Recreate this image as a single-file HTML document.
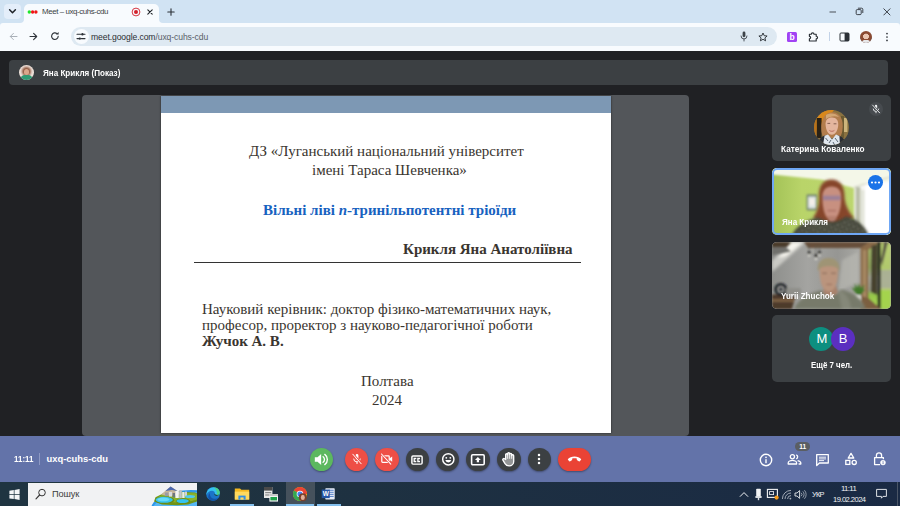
<!DOCTYPE html>
<html lang="uk">
<head>
<meta charset="utf-8">
<title>Meet – uxq-cuhs-cdu</title>
<style>
*{box-sizing:border-box;margin:0;padding:0}
html,body{width:900px;height:506px;overflow:hidden;background:#202124}
body{position:relative;font-family:"Liberation Sans",sans-serif;color:#fff}
.abs,.abs-all *{position:absolute}
div,span,svg{position:absolute;white-space:nowrap}
/* chrome */
#tabstrip{left:0;top:0;width:900px;height:23px;background:#d1e3f3}
#toolbar{left:0;top:23px;width:900px;height:28px;background:#f8fbfe}
#tab{left:23.5px;top:3.7px;width:135.5px;height:20.3px;background:#f8fbfe;border-radius:5px 5px 0 0}
#tabmenu{left:4px;top:4px;width:17px;height:15px;background:#e4eefa;border-radius:4px}
#omni{left:71px;top:27px;width:706px;height:19px;border-radius:10px;background:#dee9f2}
#sitebtn{left:74px;top:29px;width:15px;height:15px;border-radius:8px;background:#f8fbfe}
.ct{color:#2b2f33;font-size:8.3px;line-height:10px}
/* meet */
#meet{left:0;top:51px;width:900px;height:385px;background:#202124}
#pbar{left:9px;top:60px;width:879px;height:25px;border-radius:4px;background:#3c4043}
#stage{left:82px;top:95px;width:607px;height:341px;border-radius:4px;background:#53565a}
#slide{left:161px;top:96px;width:450px;height:337px;background:#fff;box-shadow:0 0 2px rgba(0,0,0,.6)}
#band{left:0;top:0;width:450px;height:17px;background:#7d98b4}
.st{font-family:"Liberation Serif",serif;font-size:15px;line-height:18px;color:#3a352f}
.tile{left:772px;width:119px;height:67px;border-radius:5px;background:#3c4043;overflow:hidden}
.nm{font-weight:bold;font-size:9.2px;line-height:10px;color:#fff;transform:scaleX(.88);transform-origin:0 50%}
/* bottom */
#bbar{left:0;top:436px;width:900px;height:46px;background:#6373a9}
.btn{top:447.7px;width:23.6px;height:23.6px;border-radius:12px;background:#3c4043;box-shadow:0 1px 2px rgba(0,0,0,.35)}
.red{background:#ea4335}
/* taskbar */
#task{left:0;top:482px;width:900px;height:24px;background:linear-gradient(90deg,#20353f 0%,#1e3141 40%,#1a2a44 100%)}
</style>
</head>
<body>
<!-- ===== Chrome window frame ===== -->
<div id="tabstrip"></div>
<div id="toolbar"></div>
<div id="tabmenu"></div>
<div id="tab"></div>
<svg style="left:19.5px;top:19px" width="4" height="4" viewBox="0 0 4 4"><path d="M0 4 H4 V0 A4 4 0 0 1 0 4 Z" fill="#f8fbfe"/></svg>
<svg style="left:159px;top:19px" width="4" height="4" viewBox="0 0 4 4"><path d="M4 4 H0 V0 A4 4 0 0 0 4 4 Z" fill="#f8fbfe"/></svg>
<svg style="left:0;top:23px" width="3" height="3" viewBox="0 0 3 3"><path d="M0 0 H3 A3 3 0 0 0 0 3 Z" fill="#d1e3f3"/></svg>
<svg style="left:897px;top:23px" width="3" height="3" viewBox="0 0 3 3"><path d="M3 0 H0 A3 3 0 0 1 3 3 Z" fill="#d1e3f3"/></svg>
<div id="omni"></div>
<div id="sitebtn"></div>

<!-- tab strip icons -->
<svg style="left:8px;top:8px" width="9" height="7" viewBox="0 0 9 7"><path d="M1.6 1.8 L4.5 4.7 L7.4 1.8" fill="none" stroke="#1f2328" stroke-width="1.5" stroke-linecap="round" stroke-linejoin="round"/></svg>
<svg style="left:27px;top:9px" width="12" height="6" viewBox="0 0 12 6"><circle cx="2.3" cy="3" r="1.7" fill="#1ee62c"/><circle cx="5.6" cy="3" r="1.7" fill="#f01616"/><circle cx="8.9" cy="3" r="1.7" fill="#f01616"/></svg>
<svg style="left:131px;top:7px" width="10" height="10" viewBox="0 0 10 10"><circle cx="5" cy="5" r="3.9" fill="none" stroke="#d3202c" stroke-width="0.9"/><circle cx="5" cy="5" r="2" fill="#d3202c"/></svg>
<svg style="left:147px;top:9px" width="6" height="6" viewBox="0 0 6 6"><path d="M0.8 0.8 L5.2 5.2 M5.2 0.8 L0.8 5.2" stroke="#1f2328" stroke-width="1.1" stroke-linecap="round"/></svg>
<svg style="left:167px;top:8px" width="8" height="8" viewBox="0 0 8 8"><path d="M4 0.8 V7.2 M0.8 4 H7.2" stroke="#2b3036" stroke-width="1.1" stroke-linecap="round"/></svg>
<!-- window controls -->
<svg style="left:829px;top:11px" width="8" height="2" viewBox="0 0 8 2"><path d="M0.5 1 H7" stroke="#3a3f45" stroke-width="0.9"/></svg>
<svg style="left:855px;top:7px" width="9" height="9" viewBox="0 0 9 9"><rect x="1.2" y="2.6" width="5" height="5" rx="1" fill="none" stroke="#2b3036" stroke-width="0.9"/><path d="M2.9 1.2 H6.6 Q7.8 1.2 7.8 2.4 V6" fill="none" stroke="#2b3036" stroke-width="0.9"/></svg>
<svg style="left:883px;top:8px" width="8" height="8" viewBox="0 0 8 8"><path d="M0.8 0.8 L7 7 M7 0.8 L0.8 7" stroke="#2b3036" stroke-width="0.9" stroke-linecap="round"/></svg>
<!-- nav buttons -->
<svg style="left:9px;top:32px" width="9" height="9" viewBox="0 0 9 9"><path d="M8 4.5 H1.4 M4.4 1.4 L1.3 4.5 L4.4 7.6" fill="none" stroke="#a9b0b8" stroke-width="1" stroke-linecap="round" stroke-linejoin="round"/></svg>
<svg style="left:29px;top:32px" width="9" height="9" viewBox="0 0 9 9"><path d="M1 4.5 H7.6 M4.6 1.4 L7.7 4.5 L4.6 7.6" fill="none" stroke="#30353b" stroke-width="1.1" stroke-linecap="round" stroke-linejoin="round"/></svg>
<svg style="left:50px;top:31px" width="10" height="10" viewBox="0 0 10 10"><path d="M8.2 5.3 A3.3 3.3 0 1 1 7 2.6" fill="none" stroke="#30353b" stroke-width="1.15" stroke-linecap="round"/><path d="M8.6 0.9 V3.6 H5.9 Z" fill="#30353b"/></svg>
<!-- site settings (tune) icon -->
<svg style="left:76px;top:32px" width="10" height="9" viewBox="0 0 10 9"><path d="M1 2.2 H4.6 M7.6 2.2 H9 M1 6.6 H2.6 M5.4 6.6 H9" stroke="#2b3036" stroke-width="1.1" stroke-linecap="round"/><circle cx="6.4" cy="2.2" r="1.2" fill="#2b3036"/><circle cx="3.8" cy="6.6" r="1.2" fill="#2b3036"/></svg>
<!-- mic -->
<svg style="left:740px;top:31px" width="8" height="11" viewBox="0 0 8 11"><rect x="2.6" y="0.6" width="2.8" height="5.6" rx="1.4" fill="#3d4349"/><path d="M1 5 A3 3 0 0 0 7 5 M4 8 V10" fill="none" stroke="#3d4349" stroke-width="0.9" stroke-linecap="round"/></svg>
<!-- star -->
<svg style="left:758px;top:32px" width="10" height="10" viewBox="0 0 10 10"><path d="M5 1 L6.2 3.7 L9.1 4 L6.9 5.9 L7.6 8.8 L5 7.3 L2.4 8.8 L3.1 5.9 L0.9 4 L3.8 3.7 Z" fill="none" stroke="#2b3036" stroke-width="0.95" stroke-linejoin="round"/></svg>
<!-- purple ext -->
<div style="left:787px;top:32px;width:10px;height:10px;border-radius:1.5px;background:#a142f4"></div>
<span style="left:789.6px;top:31.6px;font-size:8.5px;line-height:10px;font-weight:bold;color:#fff">b</span>
<!-- puzzle -->
<svg style="left:808px;top:31px" width="11" height="11" viewBox="0 0 11 11"><path d="M1.4 3.2 H3.3 A1.35 1.35 0 0 1 6 3.2 H8.2 V5.2 A1.35 1.35 0 0 1 8.2 7.9 V10 H1.4 V7.8 A1.25 1.25 0 0 0 1.4 5.3 Z" fill="none" stroke="#2b3036" stroke-width="1.15" stroke-linejoin="round"/></svg>
<div style="left:829px;top:32px;width:1px;height:9px;background:#c3d3e8"></div>
<!-- side panel -->
<svg style="left:839px;top:32px" width="11" height="10" viewBox="0 0 11 10"><rect x="1" y="1" width="9" height="8" rx="1" fill="none" stroke="#2b3036" stroke-width="1"/><rect x="5.6" y="1" width="4.4" height="8" fill="#2b3036"/></svg>
<!-- avatar -->
<div style="left:860px;top:31px;width:12px;height:12px;border-radius:6px;background:radial-gradient(circle at 50% 45%,#e9c6b3 0 30%,#8a4a32 34% 62%,#5d2f22 66%);overflow:hidden"><div style="left:2px;top:8.5px;width:8px;height:5px;border-radius:3px;background:#e8e8ea"></div></div>
<!-- kebab -->
<svg style="left:885px;top:32px" width="4" height="10" viewBox="0 0 4 10"><circle cx="2" cy="1.6" r="0.85" fill="#2b3036"/><circle cx="2" cy="5" r="0.85" fill="#2b3036"/><circle cx="2" cy="8.4" r="0.85" fill="#2b3036"/></svg>
<span class="ct" style="left:42px;top:7px;font-size:7.9px;letter-spacing:-0.4px;color:#3a3f45">Meet – uxq-cuhs-cdu</span>
<span class="ct" style="left:91px;top:32px;font-size:8.6px;letter-spacing:-0.1px">meet.google.com<span style="position:static;color:#596068">/uxq-cuhs-cdu</span></span>

<!-- ===== Meet ===== -->
<div id="meet"></div>
<div id="pbar"></div>
<div style="left:18.5px;top:65px;width:15px;height:15px;border-radius:8px;overflow:hidden;background:#efe3dc">
  <div style="left:3px;top:2px;width:9px;height:9px;border-radius:5px;background:#8a4f35;filter:blur(.8px)"></div>
  <div style="left:5px;top:4px;width:5px;height:6px;border-radius:3px;background:#d9a78c;filter:blur(.6px)"></div>
  <div style="left:1px;top:9.5px;width:13px;height:7px;border-radius:5px 5px 0 0;background:#2f9a74;filter:blur(.7px)"></div>
</div>
<span class="nm" style="left:42.8px;top:67.6px">Яна Крикля (Показ)</span>

<div id="stage"></div>
<div id="slide">
  <div id="band"></div>
  <span class="st" style="left:88px;top:46px">ДЗ «Луганський національний університет</span>
  <span class="st" style="left:151px;top:65px">імені Тараса Шевченка»</span>
  <span class="st" style="left:102px;top:105px;font-weight:bold;color:#1762bf">Вільні ліві <i>n</i>-тринільпотентні тріоїди</span>
  <span class="st" style="left:242px;top:144px;font-weight:bold">Крикля Яна Анатоліївна</span>
  <div style="left:33px;top:166px;width:387px;height:1px;background:#333"></div>
  <span class="st" style="left:41px;top:204px">Науковий керівник: доктор фізико-математичних наук,</span>
  <span class="st" style="left:41px;top:220px">професор, проректор з науково-педагогічної роботи</span>
  <span class="st" style="left:41px;top:236px;font-weight:bold">Жучок А. В.</span>
  <span class="st" style="left:200px;top:276px">Полтава</span>
  <span class="st" style="left:211px;top:295px">2024</span>
</div>


<!-- tiles -->
<div class="tile" id="t1" style="top:95px;height:66px">
  <svg style="left:42.4px;top:14.7px" width="35" height="35" viewBox="0 0 35 35">
    <defs><clipPath id="av"><circle cx="17.5" cy="17.5" r="17.5"/></clipPath>
    <filter id="b0" x="-5%" y="-5%" width="110%" height="110%"><feGaussianBlur stdDeviation="0.7"/></filter></defs>
    <g clip-path="url(#av)">
      <rect width="35" height="35" fill="#8a7240"/>
      <g filter="url(#b0)">
        <path d="M0 0 H20 L8 16 L0 22 Z" fill="#d8881c"/>
        <rect x="2.6" y="8" width="5" height="20" fill="#2b2418"/>
        <rect x="0" y="10" width="2.6" height="16" fill="#b8721a"/>
        <rect x="27" y="6" width="3" height="22" fill="#6b5a30"/>
        <rect x="30" y="8" width="3.4" height="14" fill="#cdb57c"/>
        <!-- hair -->
        <path d="M8 24 C5.6 12 10 2.4 18.6 2.2 C26 2.2 30 10 28.4 20 C28 24 26.6 26.6 25 28 L10 28 Z" fill="#b27d4e"/>
        <path d="M12 5 C16 2.6 22 3 25 7 C21 5.6 16 6 12 9 Z" fill="#d2a673"/>
        <!-- face -->
        <path d="M11.6 15 C11.2 9.6 14 7.4 18 7.4 C22.4 7.4 24.8 10.4 24.2 15.6 C23.8 20.6 21.6 24.8 17.8 24.8 C14 24.8 12 20 11.6 15 Z" fill="#e4b69e"/>
        <path d="M13.4 13.4 H16.2 M19.6 13.8 H22.4" stroke="#7a5848" stroke-width=".9"/>
        <path d="M15.4 20.4 C16.6 21.6 19 21.6 20.4 20.4" stroke="#b5655a" stroke-width=".9" fill="none"/>
        <!-- clothes -->
        <path d="M3 35 C5 28 9 25.6 13 25 L18 29 L23 25 C28 26 31 29 32.6 35 Z" fill="#2c2f36"/>
        <path d="M9 35 L10.6 25.8 L14 24.4 L18 29.4 L22 24.4 L25.4 26 L26 35 Z" fill="#dfe6ee"/>
        <path d="M11.6 28 L14 31 M21 28 L24 32 M15 33 L17 30 M19 32 L20.6 35" stroke="#4a5663" stroke-width=".9"/>
      </g>
    </g>
  </svg>
  <div style="left:97px;top:7px;width:14px;height:14px;border-radius:7px;background:#474b4f"></div>
  <svg style="left:99px;top:9px" width="10" height="10" viewBox="0 0 10 10"><rect x="3.8" y="0.8" width="2.4" height="5" rx="1.2" fill="#f1f3f4"/><path d="M2.2 4.6 A2.8 2.8 0 0 0 7.8 4.6 M5 7.4 V9.2" fill="none" stroke="#f1f3f4" stroke-width="0.9"/><path d="M1.4 0.9 L8.8 9" stroke="#474b4f" stroke-width="2"/><path d="M1.6 1.1 L8.6 8.8" stroke="#f1f3f4" stroke-width="0.9" stroke-linecap="round"/></svg>
  <span class="nm" style="left:9.3px;top:49px;transform:scaleX(.896)">Катерина Коваленко</span>
</div>

<div class="tile" id="t2" style="top:168px;height:66.5px;background:#b7d169">
  <svg style="left:0;top:0" width="119" height="67" viewBox="0 0 119 67">
    <defs>
      <filter id="b1" x="-5%" y="-5%" width="110%" height="110%"><feGaussianBlur stdDeviation="0.9"/></filter>
      <filter id="b2" x="-5%" y="-5%" width="110%" height="110%"><feGaussianBlur stdDeviation="1.6"/></filter>
      <linearGradient id="wall" x1="0" x2="1" y1="0" y2="0"><stop offset="0" stop-color="#a3c257"/><stop offset=".25" stop-color="#b9d469"/><stop offset=".7" stop-color="#bcd66e"/></linearGradient>
      <pattern id="flo" width="5" height="5" patternUnits="userSpaceOnUse" patternTransform="rotate(25)"><rect width="5" height="5" fill="#3b3c31"/><circle cx="1.4" cy="1.6" r="1.1" fill="#8d8f7e"/><circle cx="3.8" cy="3.8" r="0.9" fill="#c9cbb8"/></pattern>
    </defs>
    <rect width="119" height="67" fill="url(#wall)"/>
    <g filter="url(#b1)">
      <!-- ceiling -->
      <path d="M0 0 H119 V20 H82 L49 11.6 L0 6.6 Z" fill="#f4f7e8"/>
      <!-- window / curtain -->
      <rect x="82" y="17" width="40" height="52" fill="#f7f7f2"/>
      <rect x="83.5" y="19" width="5" height="50" fill="#b9bda8"/>
      <rect x="88.5" y="22" width="4" height="47" fill="#e3e5da"/>
      <rect x="93" y="14" width="26" height="55" fill="#ffffff"/>
      <path d="M82 19 L119 9" stroke="#cfd2be" stroke-width="1.2"/>
      <!-- picture frame -->
      <rect x="34.6" y="26.4" width="10.6" height="16" fill="#76886f"/>
      <rect x="36.2" y="28.6" width="7.6" height="11.8" fill="#dfe6e4"/>
      <rect x="37.4" y="31" width="5" height="6" fill="#f4efe9"/>
    </g>
    <g filter="url(#b2)">
      <!-- hair -->
      <path d="M47 30 C46 17 52 11.6 59.5 11.6 C67 11.6 73 17 72.6 30 C73.6 38 77 44 82 50 L60 58 L41 50 C45 44 47 38 47 30 Z" fill="#86452c"/>
    </g>
    <g filter="url(#b1)">
      <!-- face -->
      <path d="M50.4 30 C50 22 54 18.6 59.8 18.6 C65.6 18.6 69.6 22 69.2 30 C69.2 40 66.6 52 59.8 52 C53 52 50.4 40 50.4 30 Z" fill="#c89080"/>
      <path d="M51 27.6 H68.6 V32.2 H51 Z" fill="#7a72a8" opacity=".55"/>
      <path d="M55.5 42.6 H64" stroke="#9a5a50" stroke-width="1.3" opacity=".7"/>
      <path d="M55 48 C56 57 64 57 65 48 Z" fill="#b67f6e"/>
    </g>
    <g filter="url(#b2)">
      <!-- clothes -->
      <path d="M20 67 C25 57 36 51.6 46 49.6 C52 52.6 55 54 60 54 C65 54 69 52 74 48.6 C84 50.6 92 57 96.6 67 Z" fill="#45463a"/>
    </g>
    <g filter="url(#b1)" opacity=".6">
      <path d="M23 67 C27 58.6 37 53.6 46 51.6 C52 54.6 55 56 60 56 C65 56 69 54 74 50.6 C83 52.6 90 58 94 67 Z" fill="url(#flo)"/>
    </g>
  </svg>
  <div style="left:0;top:0;width:119px;height:66.5px;border:2.3px solid #6fa7f5;border-radius:5px"></div>
  <div style="left:96.3px;top:7.3px;width:15.2px;height:15.2px;border-radius:8px;background:#1a73e8"></div>
  <svg style="left:98.4px;top:13.4px" width="11" height="3" viewBox="0 0 11 3"><circle cx="2" cy="1.5" r="1.1" fill="#fff"/><circle cx="5.5" cy="1.5" r="1.1" fill="#fff"/><circle cx="9" cy="1.5" r="1.1" fill="#fff"/></svg>
  <span class="nm" style="left:9.6px;top:49px;transform:scaleX(.875)">Яна Крикля</span>
</div>

<div class="tile" id="t3" style="top:242px;height:66.5px;background:#a9a9a5">
  <svg style="left:0;top:0" width="119" height="67" viewBox="0 0 119 67">
    <defs>
      <linearGradient id="cw" x1="0" x2="1" y1="0" y2="0"><stop offset="0" stop-color="#8e8f8c"/><stop offset=".3" stop-color="#a4a4a1"/><stop offset=".55" stop-color="#969693"/><stop offset=".75" stop-color="#aaaaa5"/></linearGradient>
      <linearGradient id="gl" x1="0" x2="0" y1="0" y2="1"><stop offset="0" stop-color="#a9c070"/><stop offset=".35" stop-color="#8ea65c"/><stop offset=".52" stop-color="#a5a698"/><stop offset=".7" stop-color="#9a9d8c"/><stop offset=".78" stop-color="#93c548"/><stop offset="1" stop-color="#b0dc58"/></linearGradient>
    </defs>
    <rect width="119" height="67" fill="url(#cw)"/>
    <g filter="url(#b2)">
      <!-- sunlight band -->
      <path d="M18 0 H34 L0 30 V19 Z" fill="#c9c9c4"/>
      <path d="M20 0 H31 L14 14 L6 16 Z" fill="#f6f5ee"/>
      <path d="M70 18 L86 10 V40 L66 50 Z" fill="#bdbdb6" opacity=".6"/>
    </g>
    <g filter="url(#b1)">
      <!-- beams -->
      <path d="M0 0 H19 L14 5.6 H0 Z" fill="#4b3a29"/>
      <path d="M0 5.6 H14 L19 9.4 L0 13 Z" fill="#70706c"/>
      <path d="M32 0 H97 L94 6 H36 Z" fill="#67503a"/>
      <!-- right frame -->
      <path d="M88.6 6 L97 0 H119 V67 H88.6 Z" fill="#8a6b49"/>
      <rect x="91" y="8" width="3" height="50" fill="#a88a63"/>
      <!-- glass -->
      <path d="M96.4 8 L104 2 H119 V67 H108 L96.4 57 Z" fill="url(#gl)"/>
      <path d="M108.4 0 H119 V67 H108.4 Z" fill="#c3da74" opacity=".65"/>
      <path d="M109 28 H119 V46 H109 Z" fill="#a8ab9a" opacity=".8"/>
      <path d="M108.4 48 H119 V67 H108.4 Z" fill="#a4d44d"/>
      <!-- trunks -->
      <path d="M99.4 4 L105.4 2 L105 53 L98.8 50 Z" fill="#46432f"/>
      <path d="M112 0 L116 0 L110 24 L109 18 Z" fill="#5a5746"/>
      <rect x="105.6" y="0" width="3" height="67" fill="#1d1e1a"/>
      <path d="M88.6 54 L96.4 56 L109 67 H92 Z" fill="#7c5f40"/>
      <!-- lamps -->
      <path d="M37 3 V10 M44 3 V13 M47.4 3 V10" stroke="#55554f" stroke-width=".6"/>
      <rect x="35.8" y="9.2" width="2.6" height="3.4" fill="#2e2e2b"/><circle cx="37.1" cy="13.4" r="1.1" fill="#ecebe2"/>
      <rect x="42.6" y="12.2" width="2.8" height="3.6" fill="#2e2e2b"/><circle cx="44" cy="16.8" r="1.2" fill="#ecebe2"/>
      <rect x="46.2" y="9" width="2.6" height="3.4" fill="#2e2e2b"/><circle cx="47.5" cy="13.2" r="1.1" fill="#ecebe2"/>
      <!-- desk / fan / device -->
      <path d="M0 52.6 H24 L20 67 H0 Z" fill="#4d3a29"/>
      <path d="M0 57 H22 V60 H0 Z" fill="#7a5e42"/>
      <circle cx="8.8" cy="47.4" r="5.2" fill="none" stroke="#1f2227" stroke-width="2.6"/>
      <circle cx="8.8" cy="47.4" r="1.8" fill="#3a3d42"/>
      <rect x="14" y="46" width="15" height="8" rx="1.5" fill="#8f8f8a"/>
      <!-- plant -->
      <path d="M86 53 L80.4 46 L84 48 L83.4 43.6 L86 47 L87 43 L88.4 47 L91.6 44.4 L90 49 L92.6 47.4 L88 53 Z" fill="#437a2c" stroke="#437a2c" stroke-width="1.2"/>
      <rect x="83.6" y="53" width="5.4" height="5" fill="#d9d9d2"/>
    </g>
    <g filter="url(#b2)">
      <!-- sweater -->
      <path d="M22 67 C26 57 38 51 49 48.6 C53 51 56 52.6 59.6 52.6 C63 52.6 66 50.6 69 47.4 C80 49.6 90 56 94 67 Z" fill="#777a6a"/>
      <path d="M66 48 C74 50 78 58 79 67 H70 Z" fill="#8f9183" opacity=".6"/>
    </g>
    <g filter="url(#b1)">
      <!-- neck, face, hair -->
      <path d="M52 44 H64 L66 50.6 C62 55 55 55 51 50.6 Z" fill="#a8826c"/>
      <path d="M47.6 30 C47 22 51 18.6 57 18.6 C63 18.6 66.6 22 66 30 C66 39 63.6 49.6 57 49.6 C50.4 49.6 47.6 39 47.6 30 Z" fill="#ba947d"/>
      <path d="M46 30 C44.4 20 50 16 56.6 16 C63.4 16 68.6 20 67.2 30 C66 25.4 63 24 56.6 24.2 C50.6 24.2 47.4 25.6 46 30 Z" fill="#9f9474"/>
      <path d="M50 31.2 H55 M59 31.2 H64" stroke="#6d5443" stroke-width="1.1" opacity=".7"/>
      <path d="M54.4 42.4 H60" stroke="#8a5d50" stroke-width="1.1" opacity=".7"/>
    </g>
  </svg>
  <span class="nm" style="left:9.4px;top:49px;transform:scaleX(.876)">Yurii Zhuchok</span>
</div>

<div class="tile" id="t4" style="top:315.2px;height:66.4px">
  <div style="left:37px;top:12px;width:24px;height:24px;border-radius:12px;background:#0d8f80"></div>
  <div style="left:59px;top:12px;width:24px;height:24px;border-radius:12px;background:#5b2fc0"></div>
  <span style="left:44.5px;top:16px;font-size:13px;line-height:16px;color:#fff">M</span>
  <span style="left:66.8px;top:16px;font-size:13px;line-height:16px;color:#fff">B</span>
  <span class="nm" style="left:38.6px;top:45.2px;transform:scaleX(.86)">Ещё 7 чел.</span>
</div>


<!-- ===== bottom bar ===== -->
<div id="bbar"></div>
<span class="nm" style="left:14px;top:454px;font-size:9.4px;transform:scaleX(.85)">11:11</span>
<div style="left:39px;top:453px;width:1px;height:12px;background:#8d99c4"></div>
<span class="nm" style="left:46.5px;top:454px;font-size:9.4px;letter-spacing:0;transform:none">uxq-cuhs-cdu</span>

<div class="btn" style="left:309.5px;background:#5cb85f"></div>
<svg style="left:313px;top:451px" width="17" height="17" viewBox="0 0 15 15"><path d="M1.6 5.6 H4 L7.2 2.6 V12.4 L4 9.4 H1.6 Z" fill="#fff"/><path d="M8.9 5 A3.2 3.2 0 0 1 8.9 10" fill="none" stroke="#fff" stroke-width="1.2" stroke-linecap="round"/><path d="M10.4 3 A5.6 5.6 0 0 1 10.4 12" fill="none" stroke="#fff" stroke-width="1.2" stroke-linecap="round"/></svg>

<div class="btn red" style="left:344.7px;background:#ee4f46"></div>
<svg style="left:350.5px;top:453px" width="12" height="12" viewBox="0 0 12 12"><rect x="4.6" y="1" width="2.8" height="6" rx="1.4" fill="#fff"/><path d="M2.7 5.6 A3.3 3.3 0 0 0 9.3 5.6 M6 9 V11" fill="none" stroke="#fff" stroke-width="1"/><path d="M1.6 0.8 L10.6 11" stroke="#ee4f46" stroke-width="2.2"/><path d="M1.8 1.2 L10.2 10.8" stroke="#fff" stroke-width="1" stroke-linecap="round"/></svg>

<div class="btn red" style="left:375px;background:#ee4f46"></div>
<svg style="left:380px;top:453px" width="14" height="12" viewBox="0 0 14 12"><rect x="1.8" y="2.8" width="7.4" height="6.6" rx="0.8" fill="none" stroke="#fff" stroke-width="1.2"/><path d="M9.4 5.4 L12.2 3.4 V8.8 L9.4 6.8 Z" fill="#fff"/><path d="M1.2 0.6 L11.2 11.6" stroke="#ee4f46" stroke-width="2.2"/><path d="M1.5 1 L10.8 11.2" stroke="#fff" stroke-width="1.05" stroke-linecap="round"/></svg>

<div class="btn" style="left:405.5px"></div>
<svg style="left:410.3px;top:453.5px" width="14" height="12" viewBox="0 0 14 12"><rect x="1.9" y="1.9" width="10.2" height="8.2" rx="1.1" fill="none" stroke="#fff" stroke-width="1.45"/><path d="M6.3 4.5 H4.2 V7.5 H6.3 M10 4.5 H7.9 V7.5 H10" fill="none" stroke="#fff" stroke-width="1.35"/></svg>

<div class="btn" style="left:435.9px"></div>
<svg style="left:440.6px;top:452.3px" width="14.6" height="14.6" viewBox="0 0 13 13"><circle cx="6.5" cy="6.5" r="5" fill="none" stroke="#fff" stroke-width="1.3"/><circle cx="4.7" cy="5.2" r="0.8" fill="#fff"/><circle cx="8.3" cy="5.2" r="0.8" fill="#fff"/><path d="M3.8 7.2 A2.8 2.8 0 0 0 9.2 7.2 Z" fill="#fff"/></svg>

<div class="btn" style="left:466.2px"></div>
<svg style="left:470.2px;top:452.8px" width="15.8" height="13.5" viewBox="0 0 14 12"><rect x="1.4" y="1.6" width="11.2" height="8.8" rx="1" fill="none" stroke="#fff" stroke-width="1.4"/><path d="M7 3.6 L9.6 6.2 H8 V8.2 H6 V6.2 H4.4 Z" fill="#fff"/></svg>

<div class="btn" style="left:497px"></div>
<svg style="left:501.2px;top:451px" width="15.6" height="16.7" viewBox="0 0 14 15"><path d="M4.2 7.6 V3.4 A0.9 0.9 0 0 1 6 3.4 V2.4 A0.9 0.9 0 0 1 7.8 2.4 V3 A0.9 0.9 0 0 1 9.6 3 V4.2 A0.9 0.9 0 0 1 11.4 4.2 V9.4 A4 4 0 0 1 7.4 13.4 A4.4 4.4 0 0 1 3.6 11.4 L1.6 8 A1 1 0 0 1 3.2 7 Z" fill="#fff" fill-opacity=".45" stroke="#fff" stroke-width="1.2" stroke-linejoin="round"/><path d="M6 3.4 V7 M7.8 3 V7 M9.6 4 V7" stroke="#fff" stroke-width="0.8"/></svg>

<div class="btn" style="left:527.5px"></div>
<svg style="left:537.3px;top:453px" width="4" height="12" viewBox="0 0 4 12"><circle cx="2" cy="2" r="1.25" fill="#fff"/><circle cx="2" cy="6" r="1.25" fill="#fff"/><circle cx="2" cy="10" r="1.25" fill="#fff"/></svg>

<div class="btn red" style="left:558px;width:33px;background:#ea4335"></div>
<svg style="left:567px;top:454px" width="15" height="10" viewBox="0 0 15 10"><path d="M7.5 2.4 C4.6 2.4 2.3 3.5 1 5 C0.7 5.4 0.8 5.8 1.1 6.1 L2.3 7.2 C2.6 7.5 3 7.5 3.3 7.3 L4.8 6.3 C5.1 6.1 5.2 5.8 5.2 5.5 V4.6 C6.6 4.2 8.4 4.2 9.8 4.6 V5.5 C9.8 5.8 9.9 6.1 10.2 6.3 L11.7 7.3 C12 7.5 12.4 7.5 12.7 7.2 L13.9 6.1 C14.2 5.8 14.3 5.4 14 5 C12.7 3.5 10.4 2.4 7.5 2.4 Z" fill="#fff"/></svg>

<!-- right icons -->
<svg style="left:759px;top:452.5px" width="14" height="14" viewBox="0 0 14 14"><circle cx="7" cy="7" r="5.7" fill="none" stroke="#fff" stroke-width="1.4"/><rect x="6.3" y="6.2" width="1.4" height="4" fill="#fff"/><circle cx="7" cy="4.3" r="0.85" fill="#fff"/></svg>
<svg style="left:787px;top:453px" width="15" height="13" viewBox="0 0 15 13"><circle cx="5.4" cy="3.8" r="2.1" fill="none" stroke="#fff" stroke-width="1.3"/><path d="M1.2 11 V10 C1.2 8.2 3.8 7.4 5.4 7.4 C7 7.4 9.6 8.2 9.6 10 V11 Z" fill="none" stroke="#fff" stroke-width="1.3" stroke-linejoin="round"/><path d="M9.2 1.8 A2.1 2.1 0 0 1 9.2 5.8" fill="none" stroke="#fff" stroke-width="1.3"/><path d="M10.6 7.6 C12.2 8 13.8 8.8 13.8 10 V11 H11.6" fill="none" stroke="#fff" stroke-width="1.3" stroke-linejoin="round"/></svg>
<div style="left:795.3px;top:442.4px;width:14.4px;height:8.8px;border-radius:4.4px;background:#5a5e63"></div>
<span style="left:799.2px;top:442.8px;font-size:6.6px;line-height:8px;font-weight:bold;color:#fff;letter-spacing:-0.1px">11</span>
<svg style="left:815px;top:452.5px" width="15" height="14" viewBox="0 0 15 14"><path d="M1.7 1.6 H13.3 V10 H4.4 L1.7 12.6 Z" fill="none" stroke="#fff" stroke-width="1.3" stroke-linejoin="round"/><path d="M4 4.2 H11 M4 5.9 H11 M4 7.6 H9" stroke="#fff" stroke-width="0.9"/></svg>
<svg style="left:844px;top:452px" width="14" height="14" viewBox="0 0 14 14"><path d="M7 1.4 L9.8 6 H4.2 Z" fill="none" stroke="#fff" stroke-width="1.3" stroke-linejoin="round"/><rect x="1.8" y="8.4" width="4" height="4" fill="none" stroke="#fff" stroke-width="1.3"/><circle cx="10.2" cy="10.4" r="2.1" fill="none" stroke="#fff" stroke-width="1.3"/></svg>
<svg style="left:872px;top:451px" width="15" height="16" viewBox="0 0 15 16"><path d="M4.4 6.4 V4.4 A2.6 2.6 0 0 1 9.6 4.4 V6.4" fill="none" stroke="#fff" stroke-width="1.3"/><path d="M8 13.6 H2.6 V6.6 H11.4 V8.2" fill="none" stroke="#fff" stroke-width="1.3" stroke-linejoin="round"/><circle cx="11" cy="11.6" r="2.7" fill="#fff"/><rect x="10.6" y="11.2" width="0.9" height="1.9" fill="#6373a9"/><circle cx="11.05" cy="10.2" r="0.55" fill="#6373a9"/></svg>

<!-- ===== taskbar ===== -->
<div id="task"></div>
<div style="left:0;top:482px;width:28px;height:24px;background:#1f3441"></div>
<svg style="left:9px;top:489px" width="11" height="11" viewBox="0 0 11 11"><path d="M0.4 1.7 L4.8 1 V5.2 H0.4 Z M5.5 0.9 L10.6 0.1 V5.2 H5.5 Z M0.4 5.9 H4.8 V10 L0.4 9.4 Z M5.5 5.9 H10.6 V10.9 L5.5 10.1 Z" fill="#f3f5f7"/></svg>
<div style="left:28px;top:483px;width:169px;height:23px;background:#f1f2f3"></div>
<svg style="left:35px;top:488px" width="12" height="12" viewBox="0 0 12 12"><circle cx="7" cy="4.6" r="3.3" fill="none" stroke="#343434" stroke-width="1"/><path d="M4.6 7 L1 10.8" stroke="#343434" stroke-width="1.1" stroke-linecap="round"/></svg>
<span style="left:52px;top:489px;font-size:9.2px;line-height:11px;color:#3c3c3c;letter-spacing:-0.1px">Пошук</span>
<!-- search highlight picture -->
<svg style="left:150px;top:483px" width="47" height="23" viewBox="0 0 47 23">
  <defs><filter id="sb" x="-10%" y="-10%" width="120%" height="120%"><feGaussianBlur stdDeviation="0.45"/></filter></defs>
  <g filter="url(#sb)">
  <ellipse cx="41" cy="27.5" rx="40.5" ry="20.6" fill="#2f97ea"/>
  <ellipse cx="41" cy="29" rx="39" ry="20" fill="#57b6f4"/>
  <path d="M5.5 14.2 L13 10.6 L21 7 L34 9 L45 9.4 L47 10.4 V18.6 L38 21.4 L27 22.2 L12 21.4 L4 18.6 Z" fill="#6f9418"/>
  <path d="M7 14.4 L14 11 L22 8.4 L34 10 L45 10.2 L47 11 V16.6 L38 19 L27 19.6 L12 18.6 L6 16.4 Z" fill="#8bb22a"/>
  <path d="M11 11.6 L20.6 3.6 L31 10.4 L26 12.4 L15 12.6 Z" fill="#c7b598"/>
  <path d="M15.4 8 L20.6 3.6 L27.4 8 L22 7 Z" fill="#4d68ad"/>
  <rect x="15" y="9.6" width="3.4" height="3.6" fill="#9a9ca4"/>
  <rect x="19" y="9" width="3" height="4.6" fill="#d9dbe0"/>
  <rect x="22.6" y="10" width="2.4" height="4.4" fill="#6d7580"/>
  <rect x="25.4" y="8" width="3.4" height="7" fill="#f2f3f5"/>
  <rect x="29.2" y="7" width="2.6" height="8.4" fill="#bfc3cc"/>
  <rect x="32.2" y="9" width="2.4" height="6" fill="#e8eaee"/>
  <rect x="35" y="8.6" width="2" height="5" fill="#cfd3da"/>
  <ellipse cx="14.6" cy="17.2" rx="9.6" ry="3.7" fill="#6b8a12"/>
  <ellipse cx="14.2" cy="16.8" rx="8.6" ry="3" fill="#36c3ee"/>
  <ellipse cx="13.4" cy="16.4" rx="6" ry="1.8" fill="#66dcf8"/>
  <ellipse cx="33" cy="18.2" rx="7.4" ry="2.9" fill="#6b8a12"/>
  <ellipse cx="32.6" cy="18" rx="6.2" ry="2.1" fill="#36c3ee"/>
  <ellipse cx="40" cy="13.6" rx="5" ry="1.5" fill="#4fc9f0"/>
  </g>
</svg>
<!-- edge -->
<svg style="left:205px;top:486px" width="16" height="16" viewBox="0 0 16 16"><circle cx="8" cy="8" r="6.8" fill="#1b74c8"/><path d="M1.4 9 C1.4 4 5 1.2 8.6 1.2 C12.4 1.2 14.8 4 14.8 6.6 C14.8 8.6 13.2 10 11.4 10 C10 10 9.2 9.4 9.2 8.6 C9.2 8 9.8 7.8 9.8 7 C9.8 5.8 8.6 4.8 7 4.8 C4.4 4.8 2.2 6.6 1.4 9 Z" fill="#35c1f1"/><path d="M4.2 13.6 C2.6 11.6 3 8.6 5 7 C4.6 9.6 6 12.4 9 12.8 C10.8 13 12.4 12.4 13.4 11.6 C12.2 13.8 10 14.8 8 14.8 C6.4 14.8 5.2 14.4 4.2 13.6 Z" fill="#1254a8"/><path d="M8.6 1.2 C12.4 1.2 14.8 4 14.8 6.6 C14.8 8.6 13.2 10 11.4 10 C12.6 8 12 3.4 8.6 1.2 Z" fill="#4fd66a" opacity=".75"/><path d="M9.2 8.6 C9.2 9.4 10 10 11.4 10 C12.6 10 13.6 9.4 14.2 8.6 C13 9 9.8 9.4 9.8 7 C9.8 7.8 9.2 8 9.2 8.6 Z" fill="#1d3a4a"/></svg>
<!-- explorer -->
<svg style="left:234px;top:487px" width="16" height="14" viewBox="0 0 16 14"><path d="M0.8 1.4 H6 L7.4 2.8 H15.2 V12.6 H0.8 Z" fill="#f5b81f"/><path d="M0.8 4.6 H15.2 V12.6 H0.8 Z" fill="#ffd95e"/><path d="M4.4 8.6 H11.6 V12.6 H4.4 Z" fill="#2f8ee4"/><path d="M6.4 10.4 H9.6 V12.6 H6.4 Z" fill="#ffd95e"/></svg>
<!-- 3rd app -->
<svg style="left:263px;top:486px" width="16" height="17" viewBox="0 0 16 17"><rect x="1" y="1" width="8.4" height="11" fill="#e8e8e8"/><rect x="1" y="1" width="8.4" height="3.6" fill="#4a4a4a"/><rect x="2.2" y="6" width="6" height="1.2" fill="#8a8a8a"/><rect x="2.2" y="8.4" width="6" height="1.2" fill="#8a8a8a"/><rect x="6.4" y="8" width="8.6" height="7.6" fill="#f4f4f4"/><rect x="7.4" y="11" width="6.6" height="3.4" fill="#21a44c"/><rect x="6.4" y="8" width="8.6" height="2" fill="#c9c9c9"/></svg>
<!-- chrome (active) -->
<div style="left:286px;top:482px;width:28.6px;height:24px;background:#45515c"></div>
<svg style="left:292px;top:486px" width="16" height="16" viewBox="0 0 16 16"><circle cx="8" cy="8" r="7" fill="#fbbc05"/><path d="M8 8 L1.94 4.5 A7 7 0 0 1 14.06 4.5 Z" fill="#ea4335"/><path d="M8 8 L1.94 4.5 A7 7 0 0 0 8 15 Z" fill="#34a853"/><path d="M8 8 H15 A7 7 0 0 0 14.06 4.5 H8 Z" fill="#ea4335"/><circle cx="8" cy="8" r="3.3" fill="#fff"/><circle cx="8" cy="8" r="2.6" fill="#4285f4"/><circle cx="10.8" cy="11.2" r="4" fill="#7a3f2c"/><ellipse cx="10.8" cy="11.4" rx="2" ry="2.6" fill="#e0b09a"/></svg>
<!-- word -->
<svg style="left:321.4px;top:487.4px" width="14.6" height="13.7" viewBox="0 0 17 16"><rect x="5" y="1.4" width="11" height="13.2" rx="0.8" fill="#e9eef8"/><path d="M9 3.8 H14.8 M9 6.2 H14.8 M9 8.6 H14.8 M9 11 H14.8" stroke="#3d6fc0" stroke-width="1"/><rect x="0.8" y="3" width="9.4" height="10" fill="#2456a8"/><text x="5.5" y="11" font-family="Liberation Sans, sans-serif" font-weight="bold" font-size="7.6" fill="#fff" text-anchor="middle">W</text></svg>
<!-- running indicators -->
<div style="left:230px;top:504.4px;width:24px;height:1.6px;background:#84c0ee"></div>
<div style="left:286px;top:504.4px;width:28px;height:1.6px;background:#84c0ee"></div>
<div style="left:317px;top:504.4px;width:24px;height:1.6px;background:#84c0ee"></div>

<!-- tray -->
<svg style="left:739px;top:491px" width="10" height="7" viewBox="0 0 10 7"><path d="M1.2 5.4 L5 1.6 L8.8 5.4" fill="none" stroke="#f1f3f5" stroke-width="1" stroke-linecap="round" stroke-linejoin="round"/></svg>
<svg style="left:754px;top:488px" width="9" height="13" viewBox="0 0 9 13"><rect x="2.2" y="0.8" width="4.6" height="7.4" rx="0.8" fill="#f1f3f5"/><rect x="1.4" y="8" width="6.2" height="2" fill="#d9dde2"/><rect x="3.8" y="10" width="1.4" height="2.2" fill="#d9dde2"/></svg>
<svg style="left:766px;top:488px" width="14" height="13" viewBox="0 0 14 13"><rect x="1.4" y="1.4" width="10" height="8" fill="none" stroke="#f1f3f5" stroke-width="1.1"/><rect x="3.6" y="3.6" width="4" height="3" fill="none" stroke="#f1f3f5" stroke-width="0.8"/><circle cx="10.6" cy="9.6" r="2.1" fill="#f59b1b"/></svg>
<svg style="left:781px;top:489px" width="12" height="11" viewBox="0 0 12 11"><path d="M1.4 10 A8.6 8.6 0 0 1 10 1.4" fill="none" stroke="#aeb6c0" stroke-width="0.9"/><path d="M4 10 A6 6 0 0 1 10 4" fill="none" stroke="#aeb6c0" stroke-width="0.9"/><path d="M6.6 10 A3.4 3.4 0 0 1 10 6.6" fill="none" stroke="#aeb6c0" stroke-width="0.9"/><circle cx="9.4" cy="9.6" r="0.9" fill="#aeb6c0"/></svg>
<svg style="left:794px;top:489px" width="13" height="11" viewBox="0 0 13 11"><path d="M1 4 H3 L5.6 1.6 V9.4 L3 7 H1 Z" fill="none" stroke="#e8ebee" stroke-width="0.9" stroke-linejoin="round"/><path d="M7.2 3.8 A2.4 2.4 0 0 1 7.2 7.2 M8.8 2.4 A4.4 4.4 0 0 1 8.8 8.6 M10.4 1.2 A6.2 6.2 0 0 1 10.4 9.8" fill="none" stroke="#aeb6c0" stroke-width="0.8"/></svg>
<span style="left:812px;top:489.5px;font-size:7.4px;line-height:10px;color:#f1f3f5;letter-spacing:-0.7px">УКР</span>
<span style="left:841px;top:484px;font-size:7.8px;line-height:10px;color:#f1f3f5;letter-spacing:-0.65px">11:11</span>
<span style="left:833px;top:495px;font-size:7.6px;line-height:10px;color:#f1f3f5;letter-spacing:-0.55px">19.02.2024</span>
<svg style="left:875px;top:488px" width="13" height="12" viewBox="0 0 13 12"><path d="M1.6 1.4 H11.4 V8.4 H8 L6.4 10.2 V8.4 H1.6 Z" fill="none" stroke="#e8ebee" stroke-width="0.95" stroke-linejoin="round"/></svg>
<div style="left:897px;top:482px;width:1px;height:24px;background:#4a5566"></div>
</body>
</html>
